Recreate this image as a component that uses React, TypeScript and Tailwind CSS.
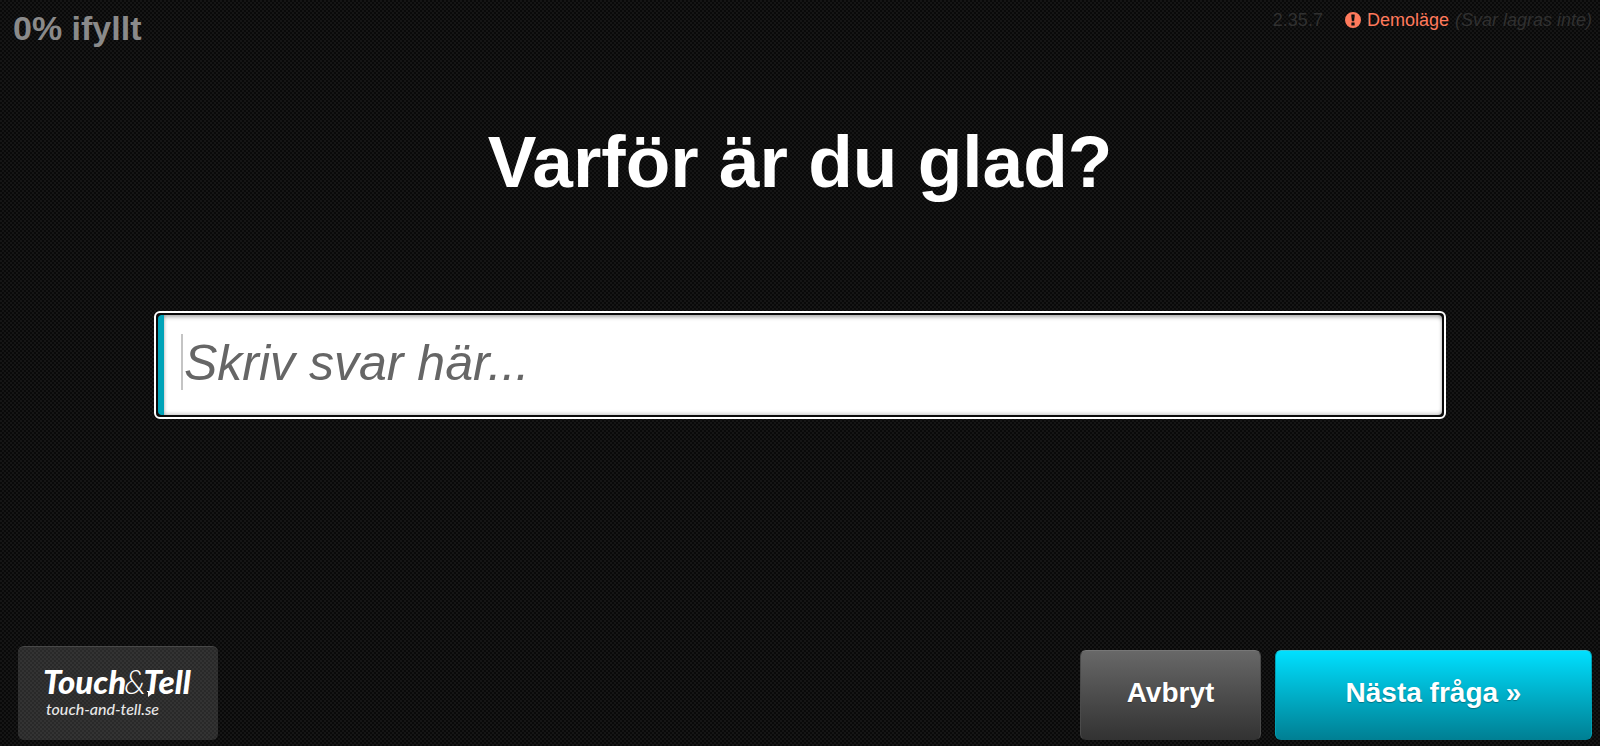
function AlertIcon({ className }: { className: string }) {
  return (
    <svg className={className} viewBox="0 0 16 16" fill="currentColor" aria-hidden="true">
      <path
        fillRule="evenodd"
        d="M8 0a8 8 0 1 0 0 16A8 8 0 0 0 8 0ZM6.3 2.6h3.4v1.2L9.1 9.2H6.9L6.3 3.8ZM6.4 10.6h3.2v2.8H6.4Z"
      />
    </svg>
  );
}

function TopBar() {
  return (
    <header className="flex items-start justify-between pl-[13px] pr-2">
      <p className="pt-2 text-[34px] leading-10 font-bold text-[#8a8a8a]">0% ifyllt</p>
      <div className="flex items-center pt-2 text-lg leading-6 text-[#303030]">
        <span className="mr-[22px]">2.35.7</span>
        <AlertIcon className="mr-1.5 size-4 text-[#ff7a5c]" />
        <span className="mr-1.5 text-[#ff7a5c]">Demoläge</span>
        <em>(Svar lagras inte)</em>
      </div>
    </header>
  );
}

function AnswerField() {
  return (
    <div className="relative mx-[154px] mt-[103px] rounded-md border-2 border-white bg-[#0a0a0a] p-0.5">
      <input
        id="answer"
        type="text"
        placeholder="Skriv svar här..."
        className="block h-[100px] w-full rounded-sm border-l-[6px] border-[#00a3b8] bg-white pr-4 pb-1 pl-5 text-[50px] text-[#333] caret-transparent shadow-[inset_0_3px_4px_-1px_rgba(0,0,0,0.35),inset_0_-2px_4px_-1px_rgba(0,0,0,0.25)] outline-none placeholder:text-[#666] placeholder:italic"
      />
      <span className="absolute top-[21px] left-[25px] h-14 w-0.5 bg-[#c4c4c4]" aria-hidden="true" />
    </div>
  );
}

function Logo() {
  return (
    <a
      href="#"
      className="flex h-[94px] w-[200px] flex-col rounded-md border-t border-[#484848] bg-white/13 pt-4 pl-[25px] font-['Lato',sans-serif] text-white italic"
    >
      <span className="flex text-[33px] leading-9 font-black">
        <span>Touch</span>
        <span className="-ml-0.5 font-light">&amp;</span>
        <span className="relative -ml-0.5">
          Tell
          <svg
            className="absolute top-7 left-0.5 h-1.5 w-2"
            viewBox="0 0 8 6"
            fill="currentColor"
            aria-hidden="true"
          >
            <path d="M1 0H8L7 2L2 6V1H1Z" />
          </svg>
        </span>
      </span>
      <span className="pl-[3px] text-base leading-5 font-medium text-[#e8e8e8]">
        touch-and-tell.se
      </span>
    </a>
  );
}

export default function App() {
  return (
    <div className="flex min-h-screen flex-col bg-[#0c0c0c] bg-[conic-gradient(#090909_25%,#151515_0_50%,#090909_0_75%,#151515_0)] bg-size-[4px_4px] font-['Liberation_Sans',Arial,sans-serif]">
      <TopBar />
      <main className="pt-[68px]">
        <h1 className="text-center text-[73px] leading-[92px] font-bold text-white">
          <label htmlFor="answer">Varför är du glad?</label>
        </h1>
        <AnswerField />
      </main>
      <footer className="mt-auto flex items-end justify-between pr-2 pb-1.5 pl-[18px]">
        <Logo />
        <div className="flex gap-3.5 text-[28px] font-bold text-white">
          <button
            type="button"
            className="h-[90px] w-[181px] rounded-md border border-t-[#777] border-r-[#4a4a4a] border-b-[#333] border-l-[#4a4a4a] bg-linear-to-b from-[#686868] to-[#333] pb-1 text-shadow-[0_1px_1px_rgba(0,0,0,0.3)]"
          >
            Avbryt
          </button>
          <button
            type="button"
            className="h-[90px] w-[317px] rounded-md border border-t-[#3fc4d4] border-r-[#00a0b4] border-b-[#008094] border-l-[#00a0b4] bg-linear-to-b from-[#00e0ff] to-[#008094] pb-1 text-shadow-[0_1px_1px_rgba(0,0,0,0.3)]"
          >
            Nästa fråga »
          </button>
        </div>
      </footer>
    </div>
  );
}
